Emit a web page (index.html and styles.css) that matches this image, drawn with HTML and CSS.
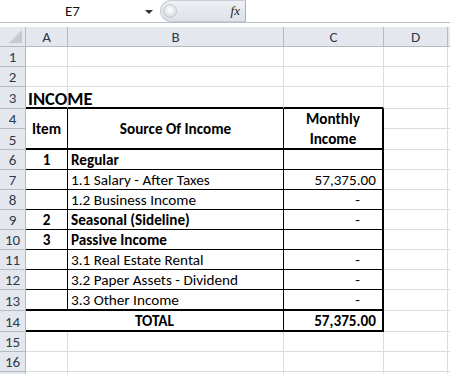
FILE: index.html
```html
<!DOCTYPE html>
<html lang="en">

<head>
    <meta charset="UTF-8">
    <title>Income Sheet</title>
    <link rel="stylesheet" href="styles.css">
</head>

<body>
    <div class="formula-bar">
        <div class="name-box">
            <span class="cell-ref">E7</span>
            <span class="drop-arrow"></span>
        </div>
        <div class="fx-area">
            <span class="grip"></span>
            <span class="fx">fx</span>
        </div>
        <div class="formula-input"></div>
    </div>

    <div class="sheet">
        <!-- column headers -->
        <div class="corner"><span class="corner-tri"></span></div>
        <div class="col-head">A</div>
        <div class="col-head">B</div>
        <div class="col-head">C</div>
        <div class="col-head">D</div>
        <div class="col-head col-rest"></div>

        <!-- row 1 -->
        <div class="row-head">1</div>
        <div class="cell"></div><div class="cell"></div><div class="cell"></div><div class="cell"></div><div class="cell rest"></div>

        <!-- row 2 -->
        <div class="row-head">2</div>
        <div class="cell"></div><div class="cell"></div><div class="cell"></div><div class="cell"></div><div class="cell rest"></div>

        <!-- row 3 -->
        <div class="row-head">3</div>
        <div class="cell title top-edge">INCOME</div>
        <div class="cell top-edge"></div>
        <div class="cell top-edge"></div>
        <div class="cell"></div><div class="cell rest"></div>

        <!-- rows 4-5 header -->
        <div class="row-head">4</div>
        <div class="cell t head-cell span-rows thick-b">Item</div>
        <div class="cell t head-cell span-rows thick-b">Source Of Income</div>
        <div class="cell t head-cell span-rows thick-b last-col wrap">Monthly<br>Income</div>
        <div class="cell"></div><div class="cell rest"></div>
        <div class="row-head">5</div>
        <div class="cell"></div><div class="cell rest"></div>

        <!-- row 6 -->
        <div class="row-head">6</div>
        <div class="cell t bold center">1</div>
        <div class="cell t bold">Regular</div>
        <div class="cell t last-col"></div>
        <div class="cell"></div><div class="cell rest"></div>

        <!-- row 7 -->
        <div class="row-head">7</div>
        <div class="cell t"></div>
        <div class="cell t">1.1 Salary - After Taxes</div>
        <div class="cell t last-col num">57,375.00</div>
        <div class="cell"></div><div class="cell rest"></div>

        <!-- row 8 -->
        <div class="row-head">8</div>
        <div class="cell t"></div>
        <div class="cell t">1.2 Business Income</div>
        <div class="cell t last-col num dash">-</div>
        <div class="cell"></div><div class="cell rest"></div>

        <!-- row 9 -->
        <div class="row-head">9</div>
        <div class="cell t bold center">2</div>
        <div class="cell t bold">Seasonal (Sideline)</div>
        <div class="cell t last-col num dash">-</div>
        <div class="cell"></div><div class="cell rest"></div>

        <!-- row 10 -->
        <div class="row-head">10</div>
        <div class="cell t bold center">3</div>
        <div class="cell t bold">Passive Income</div>
        <div class="cell t last-col"></div>
        <div class="cell"></div><div class="cell rest"></div>

        <!-- row 11 -->
        <div class="row-head">11</div>
        <div class="cell t"></div>
        <div class="cell t">3.1 Real Estate Rental</div>
        <div class="cell t last-col num dash">-</div>
        <div class="cell"></div><div class="cell rest"></div>

        <!-- row 12 -->
        <div class="row-head">12</div>
        <div class="cell t"></div>
        <div class="cell t">3.2 Paper Assets - Dividend</div>
        <div class="cell t last-col num dash">-</div>
        <div class="cell"></div><div class="cell rest"></div>

        <!-- row 13 -->
        <div class="row-head">13</div>
        <div class="cell t thick-b"></div>
        <div class="cell t thick-b">3.3 Other Income</div>
        <div class="cell t thick-b last-col num dash">-</div>
        <div class="cell"></div><div class="cell rest"></div>

        <!-- row 14 -->
        <div class="row-head">14</div>
        <div class="cell t thick-b bold center span-cols">TOTAL</div>
        <div class="cell t thick-b last-col num bold">57,375.00</div>
        <div class="cell"></div><div class="cell rest"></div>

        <!-- row 15 -->
        <div class="row-head">15</div>
        <div class="cell"></div><div class="cell"></div><div class="cell"></div><div class="cell"></div><div class="cell rest"></div>

        <!-- row 16 -->
        <div class="row-head">16</div>
        <div class="cell"></div><div class="cell"></div><div class="cell"></div><div class="cell"></div><div class="cell rest"></div>

        <!-- row 17, only its top edge shows -->
        <div class="row-head"></div>
        <div class="cell"></div><div class="cell"></div><div class="cell"></div><div class="cell"></div><div class="cell rest"></div>
    </div>
</body>

</html>
```

FILE: styles.css
```css
* {
    margin: 0;
    padding: 0;
    box-sizing: border-box;
}

html,
body {
    width: 450px;
    height: 374px;
    overflow: hidden;
    background: #ffffff;
    font-family: Carlito, Calibri, Lato, 'Liberation Sans', sans-serif;
    font-size: 15.2px;
    color: #000;
}

/* formula bar */

.formula-bar {
    display: flex;
    height: 27px;
    position: relative;
}

.formula-bar::after {
    content: '';
    position: absolute;
    left: 0;
    right: 0;
    top: 22px;
    height: 1px;
    background: #b6bcc6;
}

.name-box {
    width: 160px;
    height: 22px;
    display: flex;
    align-items: center;
    background: #fff;
}

.cell-ref {
    width: 145px;
    text-align: center;
    font-size: 15px;
    color: #111;
}

.drop-arrow {
    width: 0;
    height: 0;
    border-left: 4px solid transparent;
    border-right: 4px solid transparent;
    border-top: 4px solid #333;
    margin-top: 2px;
}

.fx-area {
    width: 86px;
    height: 22px;
    background: linear-gradient(#eef1f5, #dde2e8);
    border-radius: 11px 0 0 11px;
    border: 1px solid #c7ccd4;
    border-right: 1px solid #a9b0ba;
    display: flex;
    align-items: center;
    justify-content: space-between;
    padding: 0 5px 0 2px;
}

.grip {
    width: 14px;
    height: 14px;
    border-radius: 50%;
    background: radial-gradient(circle at 50% 40%, #ffffff 0%, #e3e6ea 55%, #c9ced5 100%);
    border: 1px solid #c3c8cf;
}

.fx {
    font-family: 'Liberation Serif', serif;
    font-style: italic;
    font-size: 13px;
    color: #222;
}

.formula-input {
    flex: 1;
    height: 22px;
    background: #fff;
}

/* sheet grid */

.sheet {
    display: grid;
    grid-template-columns: 26px 42px 216px 100px 64px 2px;
    grid-template-rows: 20px 20px 20px 22px 20px 21px 20px 20px 20px 20px 20px 20px 20px 21px 21px 20px 20px 20px;
}

.corner,
.col-head,
.row-head {
    background: #e4e8ee;
    border-right: 1px solid #b4bac3;
    border-bottom: 1px solid #b4bac3;
    color: #2d3a4b;
    font-size: 15px;
    display: flex;
    align-items: center;
    justify-content: center;
    padding-top: 1px;
}

.corner {
    position: relative;
}

.corner-tri {
    position: absolute;
    right: 3px;
    bottom: 3px;
    width: 0;
    height: 0;
    border-left: 13px solid transparent;
    border-bottom: 13px solid #c5cad1;
}

.col-rest {
    border-right: none;
}

.cell {
    border-right: 1px solid #dadcdd;
    border-bottom: 1px solid #dadcdd;
    display: flex;
    align-items: center;
    padding: 1px 3px 0;
    white-space: nowrap;
}

.rest {
    border-right: none;
}

.title {
    font-weight: bold;
    font-size: 18.5px;
    padding-left: 2px;
    padding-top: 3px;
}

.top-edge {
    border-bottom: 2px solid #000;
}

.t {
    border-right: 1px solid #000;
    border-bottom: 1px solid #000;
}

.thick-b {
    border-bottom: 2px solid #000;
}

.last-col {
    border-right: 2px solid #000;
}

.span-rows {
    grid-row: span 2;
}

.span-cols {
    grid-column: span 2;
}

.head-cell {
    font-weight: bold;
    justify-content: center;
    text-align: center;
    line-height: 20px;
}

.wrap {
    white-space: normal;
}

.bold {
    font-weight: bold;
}

.center {
    justify-content: center;
}

.num {
    justify-content: flex-end;
    padding-right: 6px;
}

.dash {
    padding-right: 22px;
}
```
